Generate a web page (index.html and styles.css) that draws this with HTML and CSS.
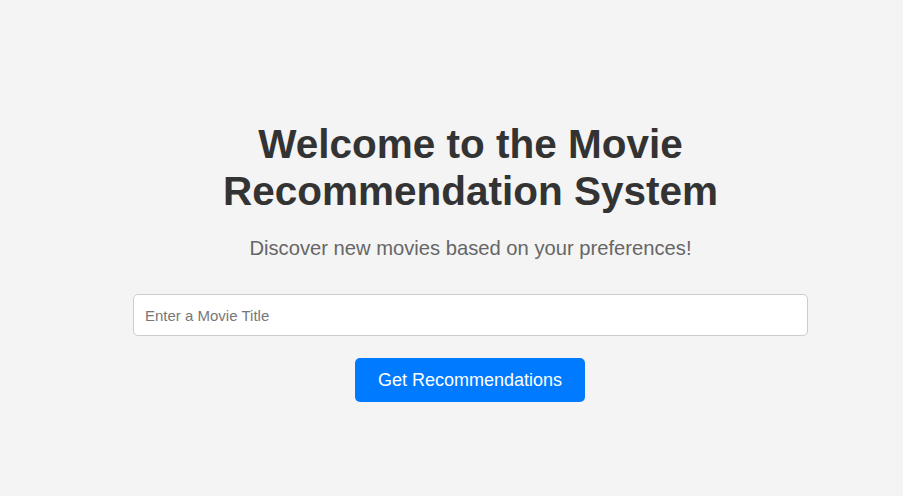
FILE: index.html
```html
<!DOCTYPE html>
<html lang="en">
<head>
<meta charset="UTF-8">
<title>Movie Recommendation System</title>
<link rel="stylesheet" href="styles.css">
</head>
<body>
<main class="page">
  <div class="container">
    <h1 class="title">Welcome to the Movie Recommendation System</h1>
    <p class="subtitle">Discover new movies based on your preferences!</p>
    <form class="search">
      <input class="search-input" type="text" placeholder="Enter a Movie Title">
      <button class="search-button" type="button">Get Recommendations</button>
    </form>
  </div>
</main>
</body>
</html>
```

FILE: styles.css
```css
html, body {
  margin: 0;
  padding: 0;
  background: #f4f4f4;
  font-family: "Liberation Sans", Arial, sans-serif;
}

.page {
  display: flex;
  justify-content: center;
  padding-left: 38px;
  padding-top: 121px;
}

.container {
  width: 675px;
  text-align: center;
}

.title {
  margin: 0 auto;
  width: 520px;
  font-size: 40.5px;
  line-height: 47px;
  font-weight: bold;
  color: #333;
}

.subtitle {
  margin: 22px 0 0;
  font-size: 20.2px;
  line-height: 23px;
  color: #666;
}

.search {
  margin-top: 34px;
  display: flex;
  flex-direction: column;
  align-items: center;
  gap: 22px;
}

.search-input {
  box-sizing: border-box;
  width: 100%;
  height: 42px;
  padding: 0 11px;
  border: 1px solid #ccc;
  border-radius: 5px;
  background: #fff;
  font-family: "Liberation Sans", Arial, sans-serif;
  font-size: 15px;
  color: #333;
  outline: none;
}

.search-input::placeholder {
  color: #777;
}

.search-button {
  box-sizing: border-box;
  width: 230px;
  height: 44px;
  margin-right: 1px;
  border: none;
  border-radius: 5px;
  background: #007bff;
  color: #fff;
  font-family: "Liberation Sans", Arial, sans-serif;
  font-size: 18px;
  cursor: pointer;
}
```
